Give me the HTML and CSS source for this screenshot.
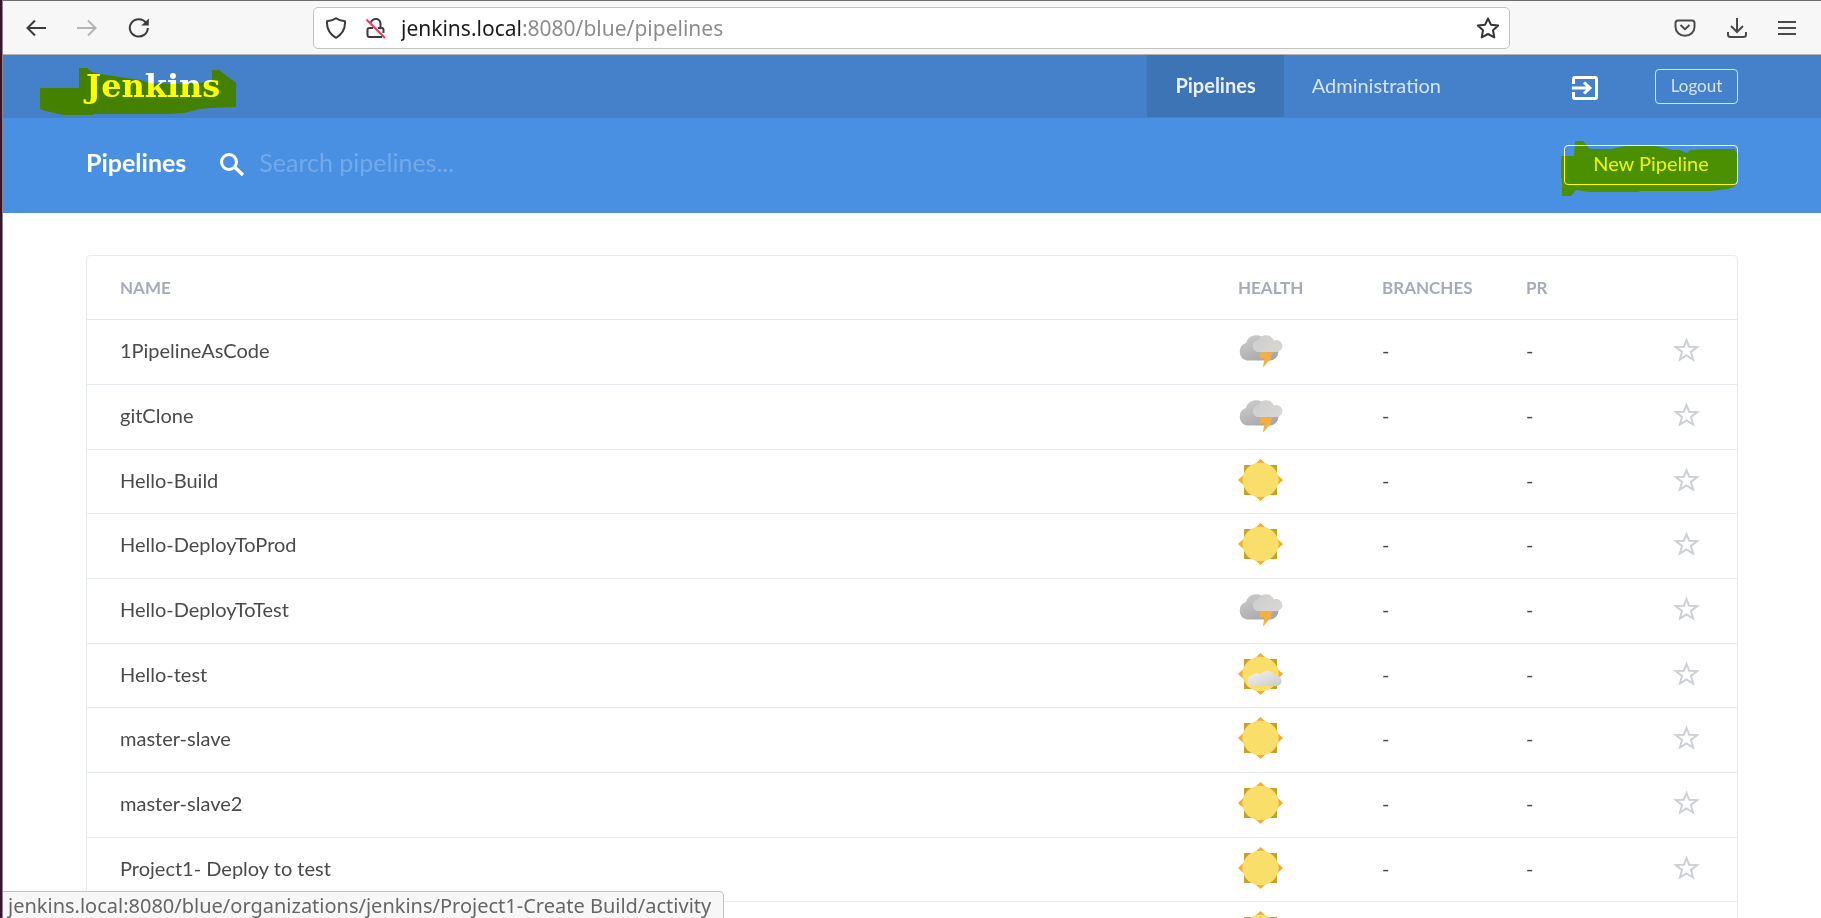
FILE: index.html
```html
<!DOCTYPE html>
<html lang="en">
<head>
<meta charset="utf-8">
<title>Jenkins Blue Ocean</title>
<link rel="stylesheet" href="styles.css">
</head>
<body>
<svg class="defs" aria-hidden="true">
  <defs>
    <linearGradient id="cloud-back" x1="0" y1="0" x2="0.7" y2="1"><stop offset="0" stop-color="#cfcfcf"/><stop offset="1" stop-color="#a6a6a6"/></linearGradient>
    <linearGradient id="cloud-front" x1="0" y1="0" x2="1" y2="1"><stop offset="0" stop-color="#cccccc"/><stop offset="1" stop-color="#dad8d6"/></linearGradient>
    <linearGradient id="cloud-light" x1="0" y1="0" x2="1" y2="1"><stop offset="0" stop-color="#f4f4f4"/><stop offset="1" stop-color="#c9c9c9"/></linearGradient>
    <symbol id="storm" viewBox="1 0 45 42">
      <path d="M10 31.500a9 9 0 0 1-1-17.400A10.500 10.500 0 0 1 28 11L41.500 22a9 9 0 0 1-9 9.500z" fill="url(#cloud-back)"/>
      <path d="M22 23a6 6 0 0 1-.5-12A8.600 8.600 0 0 1 37 11.500 6 6 0 1 1 39 23z" fill="url(#cloud-front)"/>
      <path d="M23.500 23.300h12.500l-3 5h2L26 38.500l1.300-9.200h-5z" fill="#f5b041"/>
    </symbol>
    <symbol id="sun" viewBox="0 0 45 42">
      <path d="M6 6h33v30H6z" fill="#c8a02a"/>
      <path d="M22.500 0 45 21 22.500 42 0 21z" fill="#f6ab2e"/>
      <ellipse cx="22.500" cy="21" rx="18.200" ry="17.300" fill="#fade6a"/>
    </symbol>
    <symbol id="partly" viewBox="0 0 45 42">
      <use href="#sun"/>
      <path d="M14.500 33a5.300 5.300 0 0 1-.5-10.500 6 6 0 0 1 8.500-.8A7.800 7.800 0 0 1 36.500 22.500 5.400 5.400 0 1 1 39.500 33z" fill="url(#cloud-light)"/>
    </symbol>
    <symbol id="star" viewBox="0 0 27 26">
      <path d="M13.500 3 16.100 9.700 24.200 10.100 18 14.900 20.100 22.500 13.500 18.400 6.900 22.500 9 14.900 2.800 10.100 10.900 9.700z" fill="none" stroke="#cdd0d6" stroke-width="2"/>
    </symbol>
  </defs>
</svg>

<div class="toolbar">
  <div class="history">
    <button class="tool" aria-label="Back"><svg width="20" height="18" viewBox="0 0 20 18"><path d="M20 9H2M9 1.500 1.500 9 9 16.500" fill="none" stroke="#3c3c3c" stroke-width="2"/></svg></button>
    <button class="tool" aria-label="Forward"><svg width="20" height="18" viewBox="0 0 20 18"><path d="M0 9h18M11 1.500 18.500 9 11 16.500" fill="none" stroke="#b4b4b4" stroke-width="2"/></svg></button>
    <button class="tool" aria-label="Reload"><svg width="22" height="20" viewBox="0 0 22 20"><path d="M18 4.800A9 8.600 0 1 0 19.800 10" fill="none" stroke="#3c3c3c" stroke-width="2"/><path d="M20.800 .5v7h-7.500z" fill="#3c3c3c"/></svg></button>
  </div>
  <div class="urlbar">
    <svg width="22" height="22" viewBox="0 0 22 22"><path d="M11 1.200 C13 2.700 17 3.900 20 4.300 Q20.600 15.500 11 20.800 Q1.400 15.500 2 4.300 C5 3.900 9 2.700 11 1.200z" fill="none" stroke="#3a3a3a" stroke-width="2" stroke-linejoin="round"/></svg>
    <svg class="lock" width="22" height="22" viewBox="0 0 22 22"><path d="M6 5.500a4.800 4.500 0 0 1 9.500 1V11M8 11H4.500q-2 0-2 2v5q0 2 2 2h12.500M13 11h3.500q2 0 2 2v3" fill="none" stroke="#3a3a3a" stroke-width="2"/><path d="M1.500 2.500 20 21" stroke="#f0335a" stroke-width="2"/></svg>
    <input class="url" type="text" aria-label="Address" value="jenkins.local:8080/blue/pipelines">
    <button class="tool" aria-label="Bookmark"><svg width="24" height="22" viewBox="0 0 24 22"><path d="M12 1.500 14.900 7.700 22.200 8.400 17 13.200 18.300 20.400 12 17 5.700 20.400 7 13.200 1.800 8.400 9.100 7.700z" fill="none" stroke="#333" stroke-width="2" stroke-linejoin="round"/></svg></button>
  </div>
  <div class="extras">
    <button class="tool" aria-label="Pocket"><svg width="22" height="18" viewBox="0 0 22 18"><path d="M4 1.500h14q2.500 0 2.500 2.500v4a9.500 8.800 0 0 1-19 0V4q0-2.500 2.500-2.500zM6.500 6 11 10.200 15.500 6" fill="none" stroke="#4a4a4a" stroke-width="2"/></svg></button>
    <button class="tool" aria-label="Downloads"><svg width="20" height="20" viewBox="0 0 20 20"><path d="M10 0v13M4 8l6 6 6-6M1 14v2.500q0 2.500 2.500 2.500h13q2.500 0 2.500-2.500V14" fill="none" stroke="#4a4a4a" stroke-width="2"/></svg></button>
    <button class="tool" aria-label="Menu"><svg width="18" height="14" viewBox="0 0 18 14"><path d="M0 1h18M0 7h18M0 13h18" stroke="#4a4a4a" stroke-width="2"/></svg></button>
  </div>
</div>

<header class="topbar">
  <a class="brand" href="#">Jenkins<svg class="marker marker-brand" width="196" height="47" viewBox="40 68 196 47"><path d="M40 88H79V68H87L92 72 100 74 120 77 140 80 150 83 175 84 200 83 212 81V70H219L235 82H236V107L210 108 200 109 184 113 169 114H94L93 115H64L45 111 40 109z" fill="#ff0"/></svg></a>
  <nav class="nav">
    <a class="tab tab-active" href="#">Pipelines</a>
    <a class="tab" href="#">Administration</a>
  </nav>
  <a class="exit" href="#" aria-label="Go to classic"><svg width="26" height="24" viewBox="0 0 26 24"><path d="M1.500 8V3q0-1.500 1.500-1.500h20q1.500 0 1.500 1.500v18q0 1.500-1.500 1.500H3q-1.500 0-1.500-1.500v-5M0 12h17M12 6.500l6 5.500-6 5.500" fill="none" stroke="#fff" stroke-width="3"/></svg></a>
  <button class="btn btn-small">Logout</button>
</header>

<section class="subbar">
  <h1 class="title">Pipelines</h1>
  <label class="search">
    <svg width="26" height="24" viewBox="0 0 26 24"><circle cx="10" cy="9" r="7.500" fill="none" stroke="#fff" stroke-width="3"/><path d="M15.500 14 24 22" stroke="#fff" stroke-width="3.500"/></svg>
    <input class="search-input" type="text" placeholder="Search pipelines..." aria-label="Search pipelines">
  </label>
  <div class="create">
    <button class="btn">New Pipeline</button>
    <svg class="marker marker-create" width="177" height="55" viewBox="1561 142 177 55"><path d="M1561 157H1574L1575 142H1583L1590 150H1611L1625 147H1655L1665 149 1672 151 1680 151 1687 154 1690 151 1710 150H1735V151L1738 157V178L1735 187 1728 190 1710 192H1678L1640 192 1638 193H1590L1576 191 1571 197H1562V179H1561z" fill="#ff0"/></svg>
  </div>
</section>

<main class="content">
  <table class="pipelines">
    <colgroup><col><col class="col"><col class="col"><col class="col-pr"><col class="col-star"></colgroup>
    <thead><tr><th>NAME</th><th>HEALTH</th><th>BRANCHES</th><th>PR</th><th></th></tr></thead>
    <tbody>
      <tr><td><a href="#">1PipelineAsCode</a></td><td><svg class="weather"><use href="#storm"/></svg></td><td>-</td><td>-</td><td><button class="fav" aria-label="Favorite"><svg width="27" height="26"><use href="#star"/></svg></button></td></tr>
      <tr><td><a href="#">gitClone</a></td><td><svg class="weather"><use href="#storm"/></svg></td><td>-</td><td>-</td><td><button class="fav" aria-label="Favorite"><svg width="27" height="26"><use href="#star"/></svg></button></td></tr>
      <tr><td><a href="#">Hello-Build</a></td><td><svg class="weather"><use href="#sun"/></svg></td><td>-</td><td>-</td><td><button class="fav" aria-label="Favorite"><svg width="27" height="26"><use href="#star"/></svg></button></td></tr>
      <tr><td><a href="#">Hello-DeployToProd</a></td><td><svg class="weather"><use href="#sun"/></svg></td><td>-</td><td>-</td><td><button class="fav" aria-label="Favorite"><svg width="27" height="26"><use href="#star"/></svg></button></td></tr>
      <tr><td><a href="#">Hello-DeployToTest</a></td><td><svg class="weather"><use href="#storm"/></svg></td><td>-</td><td>-</td><td><button class="fav" aria-label="Favorite"><svg width="27" height="26"><use href="#star"/></svg></button></td></tr>
      <tr><td><a href="#">Hello-test</a></td><td><svg class="weather"><use href="#partly"/></svg></td><td>-</td><td>-</td><td><button class="fav" aria-label="Favorite"><svg width="27" height="26"><use href="#star"/></svg></button></td></tr>
      <tr><td><a href="#">master-slave</a></td><td><svg class="weather"><use href="#sun"/></svg></td><td>-</td><td>-</td><td><button class="fav" aria-label="Favorite"><svg width="27" height="26"><use href="#star"/></svg></button></td></tr>
      <tr><td><a href="#">master-slave2</a></td><td><svg class="weather"><use href="#sun"/></svg></td><td>-</td><td>-</td><td><button class="fav" aria-label="Favorite"><svg width="27" height="26"><use href="#star"/></svg></button></td></tr>
      <tr><td><a href="#">Project1- Deploy to test</a></td><td><svg class="weather"><use href="#sun"/></svg></td><td>-</td><td>-</td><td><button class="fav" aria-label="Favorite"><svg width="27" height="26"><use href="#star"/></svg></button></td></tr>
      <tr><td></td><td><svg class="weather"><use href="#sun"/></svg></td><td></td><td></td><td></td></tr>
    </tbody>
  </table>
</main>

<div class="status">jenkins.local:8080/blue/organizations/jenkins/Project1-Create Build/activity</div>
</body>
</html>
```

FILE: styles.css
```css
* { box-sizing: border-box; }

html {
  height: 100%;
  border-left: 2px solid #3a142c;
  background: #fff;
}

body {
  margin: 0;
  height: 100vh;
  overflow: hidden;
  border-left: 1px solid #8d848c;
  background: #fff;
  color: #4a4a4a;
  font-family: Lato, sans-serif;
  font-size: 20px;
}

a { color: inherit; text-decoration: none; }
button, input { font: inherit; color: inherit; }
svg { display: block; flex: none; }

.defs { position: absolute; width: 0; height: 0; }

.toolbar {
  display: flex;
  align-items: center;
  height: 55px;
  border-top: 1px solid #6f6b70;
  border-bottom: 1px solid #b4b4b4;
  background: #f7f7f7;
}

.tool {
  display: flex;
  padding: 0;
  border: 0;
  background: none;
}

.history {
  display: flex;
  align-items: center;
  gap: 31px;
  width: 310px;
  padding-left: 23px;
}

.urlbar {
  display: flex;
  flex: 1;
  align-items: center;
  height: 42px;
  padding: 0 9px 0 11px;
  border: 1px solid #c2c2c2;
  border-radius: 5px;
  background: #fff;
}

.lock { margin-left: 18px; }

.url {
  flex: 1;
  min-width: 0;
  height: 32px;
  margin-left: 14px;
  padding: 0;
  border: 0;
  outline: 0;
  background: linear-gradient(90deg, #1a1a1a 121px, #8a8a8a 121px);
  background-clip: text;
  -webkit-background-clip: text;
  color: transparent;
  font-family: "Noto Sans", sans-serif;
  font-size: 21px;
}

.extras {
  display: flex;
  align-items: center;
  justify-content: flex-end;
  gap: 31px;
  width: 311px;
  padding-right: 25px;
}

.topbar {
  display: flex;
  align-items: center;
  height: 63px;
  padding: 0 83px;
  background: #4481ca;
  color: #fff;
}

.brand {
  position: relative;
  margin-right: auto;
  font-family: "DejaVu Serif", serif;
  font-size: 32px;
  font-weight: 700;
  line-height: 63px;
}

.marker {
  position: absolute;
  mix-blend-mode: multiply;
  pointer-events: none;
}

.marker-brand { left: -46px; top: 13px; }
.marker-create { left: -3px; top: -4px; }

.nav { display: flex; height: 63px; }

.tab {
  padding: 0 28px;
  color: #d5e3f5;
  line-height: 60px;
}

.tab-active {
  height: 62px;
  background: #3d74b6;
  color: #e8f0fa;
  font-weight: 700;
}

.exit { margin: 2px 57px 0 103px; }

.btn {
  width: 174px;
  height: 40px;
  padding: 0 0 4px;
  border: 1px solid #fff;
  border-radius: 4px;
  background: none;
  color: #f0f5fc;
}

.btn-small {
  width: 83px;
  height: 35px;
  padding-bottom: 2px;
  border-color: #d5e3f5;
  color: #d5e3f5;
  font-size: 17px;
}

.subbar {
  display: flex;
  align-items: center;
  height: 95px;
  padding: 0 83px 2px;
  background: #4a90e2;
  color: #fff;
}

.title {
  margin: 0;
  padding-bottom: 6px;
  font-size: 25px;
  font-weight: 700;
}

.search {
  display: flex;
  flex: 1;
  align-items: center;
  margin-left: 33px;
}

.search-input {
  flex: 1;
  min-width: 0;
  margin-left: 14px;
  padding: 0 0 6px;
  border: 0;
  outline: 0;
  background: none;
  font-size: 25px;
}

.search-input::placeholder { color: #73a9e9; opacity: 1; }

.create { position: relative; }
.create .btn { display: block; }

.content { padding: 42px 83px 0; }

.pipelines {
  width: 100%;
  table-layout: fixed;
  border: 1px solid #e6ebef;
  border-radius: 4px;
  border-spacing: 0;
}

.col { width: 144px; }
.col-pr { width: 147px; }
.col-star { width: 64px; }

.pipelines th {
  height: 64px;
  padding: 0;
  border-bottom: 1px solid #e2e8ee;
  color: #a5abb8;
  font-size: 17px;
  font-weight: 700;
  text-align: left;
}

.pipelines td {
  height: 65px;
  padding: 0 0 4px;
  border-bottom: 1px solid #e6eaee;
}

.pipelines tr:nth-child(3n) td { height: 64px; }

.pipelines th:first-child,
.pipelines td:first-child { padding-left: 33px; }

.weather { width: 45px; height: 42px; }

.fav {
  display: flex;
  padding: 0;
  border: 0;
  background: none;
}

.status {
  position: fixed;
  bottom: 0;
  left: 3px;
  height: 27px;
  padding: 0 12px 0 5px;
  border: 1px solid #c4c4c4;
  border-width: 1px 1px 0 0;
  border-radius: 0 5px 0 0;
  background: #f7f7f7;
  color: #666;
  font-family: "Noto Sans", sans-serif;
  font-size: 20px;
  line-height: 27px;
  white-space: nowrap;
}
```
